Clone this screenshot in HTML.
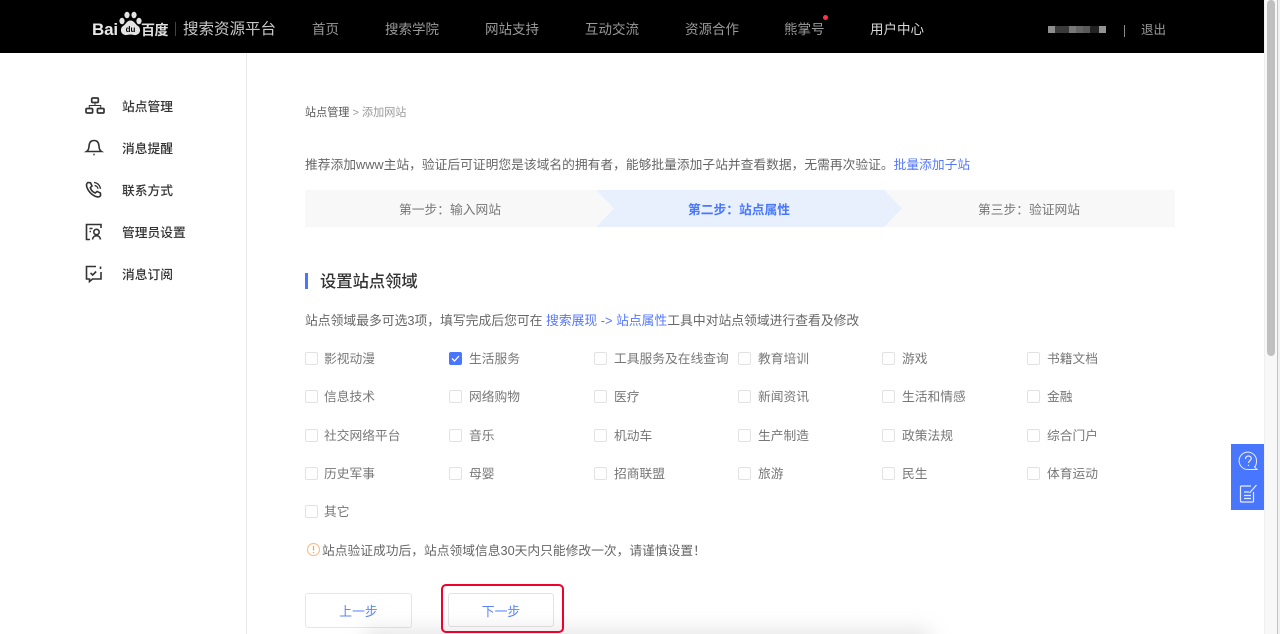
<!DOCTYPE html>
<html lang="zh"><head><meta charset="utf-8"><title>搜索资源平台</title>
<style>
*{box-sizing:border-box}
html,body{margin:0;padding:0;width:1280px;height:634px;overflow:hidden;background:#fff}
body{position:relative;font-family:"Liberation Sans","Noto Sans CJK SC",sans-serif;color:#666}
#w{position:absolute;left:0;top:0;width:1280px;height:634px;overflow:hidden;filter:blur(.3px)}
.a{position:absolute;white-space:nowrap}
.nav{top:20px;font-size:13.500px;line-height:20px;color:#9a9a9a}
.side{left:122px;font-size:12.750px;line-height:18px;color:#333;font-weight:500}
.t{font-size:12.750px;line-height:18px;color:#666}
.cb{position:absolute;width:13px;height:13px;border:1px solid #e2e2e2;border-radius:2px;background:#fff}
.lb{position:absolute;font-size:12.750px;line-height:18px;color:#777;white-space:nowrap;margin-top:1px}
svg{position:absolute;overflow:visible}
</style></head><body><div id="w">
<div class="a" style="left:0;top:0;width:1264px;height:53px;background:#000"></div>
<div class="a" style="left:92px;top:20px;font-size:17px;line-height:20px;font-weight:700;color:#e8e8e8;letter-spacing:-.2px">Bai</div>
<svg style="left:118px;top:11px" width="24" height="26" viewBox="0 0 24 26" fill="#e4e4e4"><ellipse cx="4" cy="10" rx="2.600" ry="3.200"/><ellipse cx="9" cy="4" rx="2.600" ry="3.200"/><ellipse cx="16" cy="4" rx="2.600" ry="3.200"/><ellipse cx="21" cy="10" rx="2.600" ry="3.200"/><path d="M12.500 9.500C9 9.500 8 13 5 15c-3 2-3 8 2 9 2 .4 3.500-.5 5.500-.5s3.500.9 5.500.5c5-1 5-7 2-9-3-2-4-5.500-7.500-5.500z"/><text x="12.500" y="21" font-size="8" font-weight="700" text-anchor="middle" fill="#000" font-family="Liberation Sans">du</text></svg>
<div class="a" style="left:141px;top:20px;font-size:14px;line-height:20px;font-weight:700;color:#e0e0e0;letter-spacing:-.5px">百度</div>
<div class="a" style="left:175px;top:22px;width:1px;height:14px;background:#444"></div>
<div class="a" style="left:183px;top:20px;font-size:15.500px;line-height:20px;color:#c8c8c8">搜索资源平台</div>
<div class="a nav" style="left:312px">首页</div>
<div class="a nav" style="left:385px">搜索学院</div>
<div class="a nav" style="left:485px">网站支持</div>
<div class="a nav" style="left:585px">互动交流</div>
<div class="a nav" style="left:685px">资源合作</div>
<div class="a nav" style="left:784px">熊掌号</div>
<div class="a" style="left:823px;top:15px;width:5px;height:5px;border-radius:50%;background:#ff3347"></div>
<div class="a nav" style="left:870px;color:#d8d8d8">用户中心</div>
<div class="a" style="left:1048px;top:26px;width:7px;height:7px;background:#8f8f8f"></div>
<div class="a" style="left:1055px;top:26px;width:14px;height:7px;background:#3a3a3a"></div>
<div class="a" style="left:1069px;top:26px;width:7px;height:7px;background:#787878"></div>
<div class="a" style="left:1076px;top:26px;width:7px;height:7px;background:#656565"></div>
<div class="a" style="left:1083px;top:26px;width:7px;height:7px;background:#5a5a5a"></div>
<div class="a" style="left:1090px;top:26px;width:9px;height:7px;background:#222"></div>
<div class="a" style="left:1099px;top:26px;width:7px;height:7px;background:#939393"></div>
<div class="a" style="left:1124px;top:25px;width:1px;height:12px;background:#8a8a8a"></div>
<div class="a" style="left:1141px;top:20px;font-size:12.500px;line-height:20px;color:#9a9a9a">退出</div>

<div class="a" style="left:246px;top:53px;width:1px;height:581px;background:#e8e8e8"></div>

<svg style="left:85px;top:97px" width="20" height="18" viewBox="0 0 20 18" fill="none" stroke="#333" stroke-width="1.700"><rect x="6.700" y="1" width="6.600" height="4.500" rx="1"/><rect x="1" y="11.500" width="6.600" height="4.500" rx="1"/><rect x="12.400" y="11.500" width="6.600" height="4.500" rx="1"/><path d="M10 5.500v3M4.300 11.500V8.500h11.400v3" stroke-width="1"/></svg>
<svg style="left:85px;top:139px" width="18" height="18" viewBox="0 0 18 18" fill="none" stroke="#333" stroke-width="1.600"><path d="M1.500 12.500h15c-2.300-1.500-2.300-3.500-2.600-6C13.600 3.500 12 1.500 9 1.500S4.400 3.500 4.100 6.500c-.3 2.500-.3 4.500-2.600 6z"/><path d="M8.300 15.500h1.400"/></svg>
<svg style="left:85px;top:181px" width="18" height="18" viewBox="0 0 18 18" fill="none" stroke="#333" stroke-width="1.600"><path d="M3 1.500 5.500 1.800 7 5 5.300 6.700c.8 2.500 2.500 4.300 5 5.300l1.800-1.600 3.300 1.600.2 2.500c-.8 1.300-2.200 1.700-3.600 1.300C7 14.500 2.700 10 1.600 5.100 1.300 3.600 1.800 2.300 3 1.500z"/><path d="M9 1.500c3.500.3 6 2.800 6.500 6.300M9.500 4.500c2 .3 3.200 1.500 3.600 3.300" stroke-width="1.300"/></svg>
<svg style="left:85px;top:223px" width="18" height="18" viewBox="0 0 18 18" fill="none" stroke="#333" stroke-width="1.600"><path d="M5 16.500H1.500v-15h14.500v3.500"/><path d="M4.500 5.500h3M4.500 8.500h1.500"/><circle cx="11.500" cy="9" r="2.700"/><path d="M7.500 16.500c.3-2.500 2-3.800 4-3.800s3.700 1.300 4 3.800"/></svg>
<svg style="left:85px;top:265px" width="18" height="18" viewBox="0 0 18 18" fill="none" stroke="#333" stroke-width="1.600"><path d="M11 1.500H1.500v12.500h3v2.500l3-2.500h8.500V7"/><path d="M5.500 8l2.200 2 3.500-3.500"/><path d="M15.500 1.500v2.500"/></svg>
<div class="a side" style="top:98px">站点管理</div>
<div class="a side" style="top:140px">消息提醒</div>
<div class="a side" style="top:182px">联系方式</div>
<div class="a side" style="top:224px">管理员设置</div>
<div class="a side" style="top:266px">消息订阅</div>

<div class="a" style="left:305px;top:104px;font-size:11.100px;line-height:18px;color:#555">站点管理 <span style="color:#999">&gt; 添加网站</span></div>
<div class="a t" style="left:305px;top:156px;color:#666">推荐添加www主站，验证后可证明您是该域名的拥有者，能够批量添加子站并查看数据，无需再次验证。<span style="color:#5577fb">批量添加子站</span></div>

<div class="a" style="left:305px;top:190px;width:870px;height:37px;background:#f8f8f8"></div>
<svg style="left:596px;top:190px" width="306" height="37" viewBox="0 0 306 37"><path d="M0 0H288L306 18.500 288 37H0L18 18.500z" fill="#e8f0fe"/></svg>
<div class="a t" style="left:399px;top:201px;color:#777">第一步：输入网站</div>
<div class="a t" style="left:688px;top:200px;color:#4876ff;font-weight:700;line-height:19px">第二步：站点属性</div>
<div class="a t" style="left:978px;top:201px;color:#777">第三步：验证网站</div>

<div class="a" style="left:305px;top:273px;width:3px;height:16px;background:#4876ff"></div>
<div class="a" style="left:320px;top:272px;font-size:16.300px;line-height:21px;font-weight:500;color:#333">设置站点领域</div>
<div class="a t" style="left:305px;top:312px;color:#666;font-size:12.800px">站点领域最多可选3项，填写完成后您可在 <span style="color:#5577fb">搜索展现 -&gt; 站点属性</span>工具中对站点领域进行查看及修改</div>

<!-- row 1 -->
<div class="cb" style="left:305px;top:352px"></div><div class="lb" style="left:324px;top:349px">影视动漫</div>
<div class="cb" style="left:449px;top:352px;background:#4876ff;border-color:#4876ff"></div>
<svg style="left:449px;top:352px" width="13" height="13" viewBox="0 0 13 13" fill="none" stroke="#fff" stroke-width="1.300"><path d="M3 6.500l2.500 2.500L10 4"/></svg>
<div class="lb" style="left:469px;top:349px">生活服务</div>
<div class="cb" style="left:594px;top:352px"></div><div class="lb" style="left:614px;top:349px">工具服务及在线查询</div>
<div class="cb" style="left:738px;top:352px"></div><div class="lb" style="left:758px;top:349px">教育培训</div>
<div class="cb" style="left:882px;top:352px"></div><div class="lb" style="left:902px;top:349px">游戏</div>
<div class="cb" style="left:1027px;top:352px"></div><div class="lb" style="left:1047px;top:349px">书籍文档</div>
<!-- row 2 -->
<div class="cb" style="left:305px;top:390px"></div><div class="lb" style="left:324px;top:387px">信息技术</div>
<div class="cb" style="left:449px;top:390px"></div><div class="lb" style="left:469px;top:387px">网络购物</div>
<div class="cb" style="left:594px;top:390px"></div><div class="lb" style="left:614px;top:387px">医疗</div>
<div class="cb" style="left:738px;top:390px"></div><div class="lb" style="left:758px;top:387px">新闻资讯</div>
<div class="cb" style="left:882px;top:390px"></div><div class="lb" style="left:902px;top:387px">生活和情感</div>
<div class="cb" style="left:1027px;top:390px"></div><div class="lb" style="left:1047px;top:387px">金融</div>
<!-- row 3 -->
<div class="cb" style="left:305px;top:429px"></div><div class="lb" style="left:324px;top:426px">社交网络平台</div>
<div class="cb" style="left:449px;top:429px"></div><div class="lb" style="left:469px;top:426px">音乐</div>
<div class="cb" style="left:594px;top:429px"></div><div class="lb" style="left:614px;top:426px">机动车</div>
<div class="cb" style="left:738px;top:429px"></div><div class="lb" style="left:758px;top:426px">生产制造</div>
<div class="cb" style="left:882px;top:429px"></div><div class="lb" style="left:902px;top:426px">政策法规</div>
<div class="cb" style="left:1027px;top:429px"></div><div class="lb" style="left:1047px;top:426px">综合门户</div>
<!-- row 4 -->
<div class="cb" style="left:305px;top:467px"></div><div class="lb" style="left:324px;top:464px">历史军事</div>
<div class="cb" style="left:449px;top:467px"></div><div class="lb" style="left:469px;top:464px">母婴</div>
<div class="cb" style="left:594px;top:467px"></div><div class="lb" style="left:614px;top:464px">招商联盟</div>
<div class="cb" style="left:738px;top:467px"></div><div class="lb" style="left:758px;top:464px">旅游</div>
<div class="cb" style="left:882px;top:467px"></div><div class="lb" style="left:902px;top:464px">民生</div>
<div class="cb" style="left:1027px;top:467px"></div><div class="lb" style="left:1047px;top:464px">体育运动</div>
<!-- row 5 -->
<div class="cb" style="left:305px;top:505px"></div><div class="lb" style="left:324px;top:502px">其它</div>

<svg style="left:307px;top:543px" width="13" height="13" viewBox="0 0 13 13" fill="none" stroke="#f8c08f" stroke-width="1.200"><circle cx="6.500" cy="6.500" r="6"/><path d="M6.500 3v4.500M6.500 9v1.200" stroke="#f5a35e" stroke-width="1.300"/></svg>
<div class="a t" style="left:322px;top:542px">站点验证成功后，站点领域信息30天内只能修改一次，请谨慎设置！</div>

<div class="a" style="left:305px;top:593px;width:107px;height:35px;border:1px solid #e6e6e6;border-radius:3px;background:#fff;text-align:center;font-size:12.800px;line-height:35px;color:#5b84ff">上一步</div>
<div class="a" style="left:448px;top:593px;width:106px;height:34px;border:1px solid #e3e3e3;border-radius:3px;background:#fff;text-align:center;font-size:12.800px;line-height:35px;color:#5b84ff">下一步</div>
<div class="a" style="left:365px;top:629px;width:565px;height:30px;background:#e6e6e6;filter:blur(10px);mix-blend-mode:multiply"></div>
<div class="a" style="left:441px;top:584px;width:123px;height:49px;border:2px solid #f0002d;border-radius:5px"></div>

<div class="a" style="left:1231px;top:444px;width:33px;height:66px;background:#4876ff"></div>
<svg style="left:1238px;top:451px" width="21" height="21" viewBox="0 0 21 21" fill="none" stroke="#e6ecff" stroke-width="1"><path d="M19 18.500h-9A8.700 8.700 0 1 1 18.500 10c0 3-.8 5-2 6z"/><path d="M7.500 8c0-2 1.300-3 3-3s2.800 1 2.800 2.500c0 2-2.800 2.300-2.800 4.500" stroke-width="1.200"/><path d="M10.500 13.800v1.200" stroke-width="1.200"/></svg>
<svg style="left:1239px;top:484px" width="19" height="20" viewBox="0 0 19 20" fill="none" stroke="#e6ecff" stroke-width="1.200"><path d="M12 2H2.500a1 1 0 0 0-1 1v14a1 1 0 0 0 1 1h11a1 1 0 0 0 1-1V8"/><path d="M5 8h5M5 11.500h7M5 14.500h7"/><path d="M10.500 9 17.500 1"/></svg>

<div class="a" style="left:1264px;top:0;width:16px;height:634px;background:#f8f8f8;border-left:1px solid #efefef"></div>
<div class="a" style="left:1267px;top:0;width:8px;height:356px;background:#c0c0c0;border-radius:4px"></div>
<div class="a" style="left:1277px;top:0;width:1px;height:634px;background:#c4c4c4"></div>
<div class="a" style="left:1278px;top:0;width:2px;height:634px;background:#f0f0f0"></div>
</div></body></html>
